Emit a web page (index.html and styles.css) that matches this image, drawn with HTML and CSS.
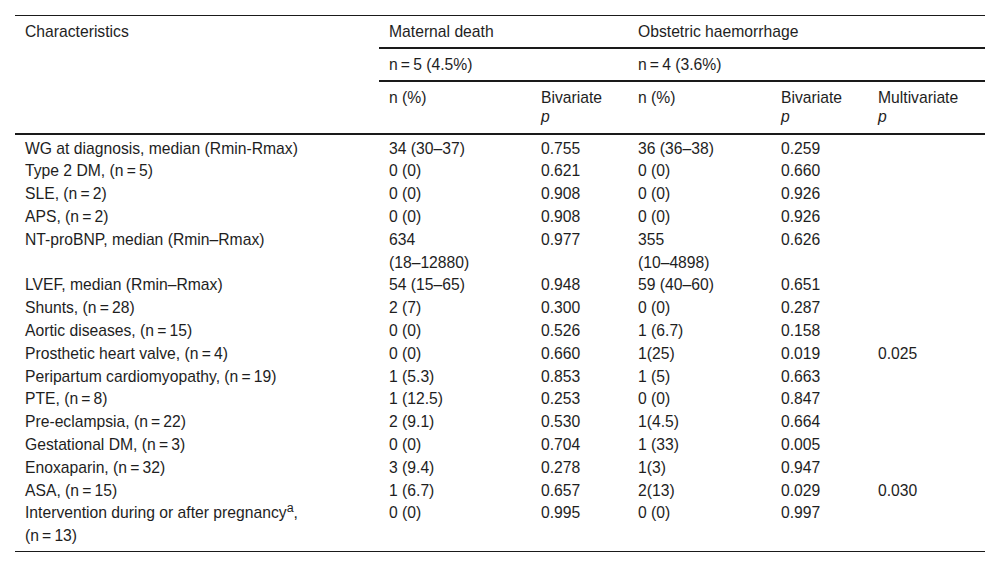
FILE: index.html
```html
<!DOCTYPE html>
<html>
<head>
<meta charset="utf-8">
<link rel="stylesheet" href="styles.css">
</head>
<body>
<table class="tbl">
  <colgroup>
    <col class="c1"><col class="c2"><col class="c3"><col class="c4"><col class="c5"><col class="c6">
  </colgroup>
  <thead>
    <tr class="h1">
      <th rowspan="3" class="chars">Characteristics</th>
      <th colspan="2" class="grp">Maternal death</th>
      <th colspan="3" class="grp">Obstetric haemorrhage</th>
    </tr>
    <tr class="h2">
      <th colspan="2" class="grp">n&#8201;=&#8201;5 (4.5%)</th>
      <th colspan="3" class="grp">n&#8201;=&#8201;4 (3.6%)</th>
    </tr>
    <tr class="h3">
      <th>n (%)</th>
      <th>Bivariate<br><i>p</i></th>
      <th>n (%)</th>
      <th>Bivariate<br><i>p</i></th>
      <th>Multivariate<br><i>p</i></th>
    </tr>
  </thead>
  <tbody>
    <tr><td>WG at diagnosis, median (Rmin-Rmax)</td><td>34 (30–37)</td><td>0.755</td><td>36 (36–38)</td><td>0.259</td><td></td></tr>
    <tr><td>Type 2 DM, (n&#8201;=&#8201;5)</td><td>0 (0)</td><td>0.621</td><td>0 (0)</td><td>0.660</td><td></td></tr>
    <tr><td>SLE, (n&#8201;=&#8201;2)</td><td>0 (0)</td><td>0.908</td><td>0 (0)</td><td>0.926</td><td></td></tr>
    <tr><td>APS, (n&#8201;=&#8201;2)</td><td>0 (0)</td><td>0.908</td><td>0 (0)</td><td>0.926</td><td></td></tr>
    <tr><td>NT-proBNP, median (Rmin–Rmax)</td><td>634<br>(18–12880)</td><td>0.977</td><td>355<br>(10–4898)</td><td>0.626</td><td></td></tr>
    <tr><td>LVEF, median (Rmin–Rmax)</td><td>54 (15–65)</td><td>0.948</td><td>59 (40–60)</td><td>0.651</td><td></td></tr>
    <tr><td>Shunts, (n&#8201;=&#8201;28)</td><td>2 (7)</td><td>0.300</td><td>0 (0)</td><td>0.287</td><td></td></tr>
    <tr><td>Aortic diseases, (n&#8201;=&#8201;15)</td><td>0 (0)</td><td>0.526</td><td>1 (6.7)</td><td>0.158</td><td></td></tr>
    <tr><td>Prosthetic heart valve, (n&#8201;=&#8201;4)</td><td>0 (0)</td><td>0.660</td><td>1(25)</td><td>0.019</td><td>0.025</td></tr>
    <tr><td>Peripartum cardiomyopathy, (n&#8201;=&#8201;19)</td><td>1 (5.3)</td><td>0.853</td><td>1 (5)</td><td>0.663</td><td></td></tr>
    <tr><td>PTE, (n&#8201;=&#8201;8)</td><td>1 (12.5)</td><td>0.253</td><td>0 (0)</td><td>0.847</td><td></td></tr>
    <tr><td>Pre-eclampsia, (n&#8201;=&#8201;22)</td><td>2 (9.1)</td><td>0.530</td><td>1(4.5)</td><td>0.664</td><td></td></tr>
    <tr><td>Gestational DM, (n&#8201;=&#8201;3)</td><td>0 (0)</td><td>0.704</td><td>1 (33)</td><td>0.005</td><td></td></tr>
    <tr><td>Enoxaparin, (n&#8201;=&#8201;32)</td><td>3 (9.4)</td><td>0.278</td><td>1(3)</td><td>0.947</td><td></td></tr>
    <tr><td>ASA, (n&#8201;=&#8201;15)</td><td>1 (6.7)</td><td>0.657</td><td>2(13)</td><td>0.029</td><td>0.030</td></tr>
    <tr class="last"><td>Intervention during or after pregnancy<sup>a</sup>,<br>(n&#8201;=&#8201;13)</td><td>0 (0)</td><td>0.995</td><td>0 (0)</td><td>0.997</td><td></td></tr>
  </tbody>
</table>
</body>
</html>
```
FILE: styles.css
```css
html, body {
  margin: 0;
  padding: 0;
  background: #ffffff;
}
body {
  padding: 15px 15px 0 15px;
  font-family: "Liberation Sans", Arial, sans-serif;
  font-size: 15.7px;
  color: #1e1e1e;
}
.tbl {
  width: 970px;
  border-collapse: collapse;
  table-layout: fixed;
  border-top: 1px solid #1a1a1a;
  border-bottom: 1px solid #1a1a1a;
}
.c1 { width: 364px; }
.c2 { width: 152px; }
.c3 { width: 97px; }
.c4 { width: 143px; }
.c5 { width: 97px; }
.c6 { width: 117px; }
th, td {
  text-align: left;
  font-weight: normal;
  vertical-align: top;
  padding: 0 0 0 10px;
  line-height: 22.8px;
}
thead th {
  padding-top: 5px;
  padding-bottom: 3px;
}
.h3 th {
  line-height: 19.5px;
  padding-top: 6px;
  padding-bottom: 6px;
}
.h1 .grp, .h2 .grp {
  border-bottom: 2px solid #1a1a1a;
}
.h3 th, .chars {
  border-bottom: 2px solid #1a1a1a;
}
tbody tr:first-child td {
  padding-top: 3px;
}
.last td {
  padding-bottom: 3px;
}
sup {
  font-size: 12.5px;
  line-height: 0;
  vertical-align: 6px;
}
i {
  font-style: italic;
}
```
